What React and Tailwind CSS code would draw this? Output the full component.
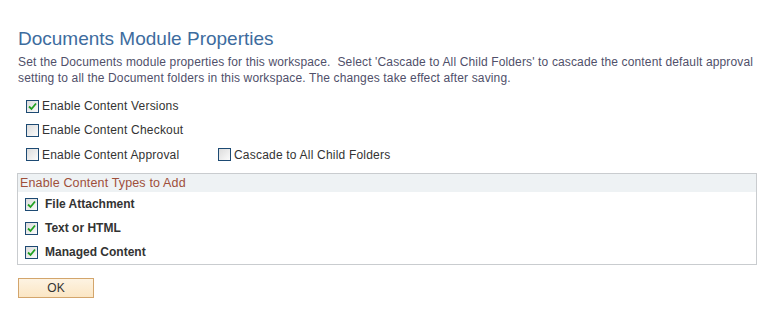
import { useState } from "react";

function Checkbox({ checked, onChange }) {
  return (
    <button
      type="button"
      onClick={onChange}
      className="w-[13px] h-[13px] shrink-0 border border-[#1d4a73] bg-gradient-to-br from-[#dcdcdc] to-[#fbfbfb] flex items-center justify-center p-0"
    >
      {checked && (
        <svg width="9" height="9" viewBox="0 0 9 9">
          <path d="M1 4.5 L3.5 7 L8 1.5" fill="none" stroke="#21a121" strokeWidth="1.8" />
        </svg>
      )}
    </button>
  );
}

export default function App() {
  const [opts, setOpts] = useState({
    versions: true,
    checkout: false,
    approval: false,
    cascade: false,
    file: true,
    html: true,
    managed: true,
  });

  const toggle = (k) => setOpts((prev) => ({ ...prev, [k]: !prev[k] }));

  return (
    <div
      className="w-[759px] h-[314px] bg-white pl-[18px] pt-[28px] text-[12px] text-[#333]"
      style={{ fontFamily: '"Liberation Sans", Arial, sans-serif' }}
    >
      <h1 className="text-[19px] leading-[22px] text-[#3d6c9e]">
        Documents Module Properties
      </h1>
      <p className="mt-[4px] leading-[16px] tracking-[0.14px] text-[#50506a] w-[740px]">
        Set the Documents module properties for this workspace.&nbsp; Select 'Cascade to All Child Folders' to cascade the content default approval setting to all the Document folders in this workspace. The changes take effect after saving.
      </p>

      <div className="mt-[8px] pl-[8px] tracking-[0.2px]">
        <div className="h-[24px] flex items-center gap-[3px]">
          <Checkbox checked={opts.versions} onChange={() => toggle("versions")} />
          <span>Enable Content Versions</span>
        </div>
        <div className="h-[24px] flex items-center gap-[3px]">
          <Checkbox checked={opts.checkout} onChange={() => toggle("checkout")} />
          <span>Enable Content Checkout</span>
        </div>
        <div className="h-[25px] flex items-center">
          <div className="w-[192px] flex items-center gap-[3px]">
            <Checkbox checked={opts.approval} onChange={() => toggle("approval")} />
            <span>Enable Content Approval</span>
          </div>
          <div className="flex items-center gap-[3px]">
            <Checkbox checked={opts.cascade} onChange={() => toggle("cascade")} />
            <span>Cascade to All Child Folders</span>
          </div>
        </div>
      </div>

      <div className="mt-[6px] -ml-px w-[740px] border border-[#c9cccf]">
        <div className="h-[18px] bg-[#eef2f4] pl-[2px] flex items-center text-[12.5px] tracking-[0.15px] text-[#9e4f3a]">
          Enable Content Types to Add
        </div>
        <div className="pl-[7px] font-bold">
          <div className="h-[24px] flex items-center gap-[7px]">
            <Checkbox checked={opts.file} onChange={() => toggle("file")} />
            <span>File Attachment</span>
          </div>
          <div className="h-[24px] flex items-center gap-[7px]">
            <Checkbox checked={opts.html} onChange={() => toggle("html")} />
            <span>Text or HTML</span>
          </div>
          <div className="h-[24px] flex items-center gap-[7px]">
            <Checkbox checked={opts.managed} onChange={() => toggle("managed")} />
            <span>Managed Content</span>
          </div>
        </div>
      </div>

      <button
        type="button"
        className="mt-[13px] w-[76px] h-[20px] border border-[#d3a56c] bg-gradient-to-b from-[#fdf3e2] to-[#fbe6c4] text-[#333] text-[12px] leading-[18px]"
      >
        OK
      </button>
    </div>
  );
}
